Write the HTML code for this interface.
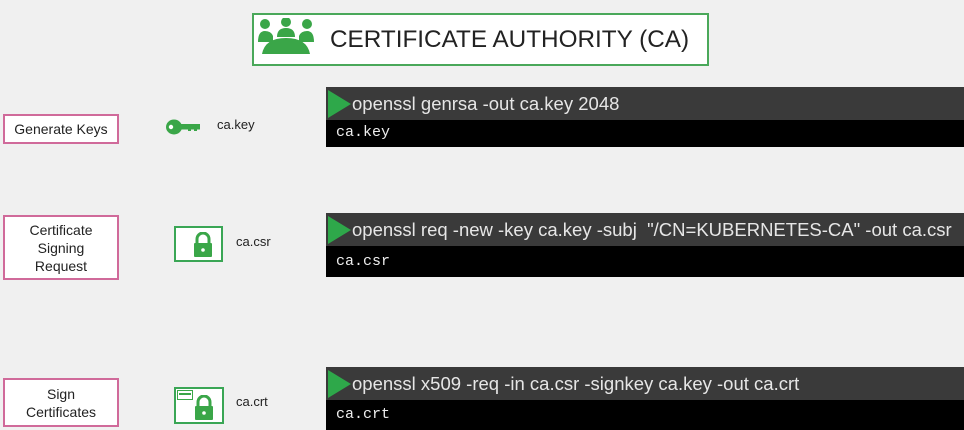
<!DOCTYPE html>
<html><head><meta charset="utf-8"><style>
body{margin:0;width:964px;height:430px;background:#f0f0f0;position:relative;overflow:hidden;font-family:"Liberation Sans",sans-serif}
.a{position:absolute}
.lbl{position:absolute;left:3px;width:112px;border:2px solid #d06a9a;background:#fff;color:#222;font-size:14px;text-align:center;display:flex;align-items:center;justify-content:center;line-height:18px}
.hd{position:absolute;left:326px;width:638px;height:33px;background:#3a3a3a;color:#e6e6e6;font-size:18.5px;line-height:33px;box-sizing:border-box;padding-left:26px;white-space:nowrap;overflow:hidden}
.hd:before{content:"";position:absolute;left:2px;top:3px;border-left:23px solid #2ea84a;border-top:14px solid transparent;border-bottom:14px solid transparent}
.bd{position:absolute;left:326px;width:638px;background:#000;color:#eee;font-family:"Liberation Mono",monospace;font-size:15px;box-sizing:border-box;padding-left:10px}
.fn{position:absolute;font-size:13px;color:#222}
.lock{position:absolute;border:2px solid #3aa655;background:#fff;box-sizing:border-box}
</style></head><body>
<div class="a" style="left:252px;top:13px;width:457px;height:53px;border:2px solid #4aa85a;background:#fff;box-sizing:border-box"></div>
<svg class="a" style="left:257px;top:18px" width="58" height="40" viewBox="0 0 58 40">
<g fill="#3aa648"><circle cx="8" cy="6" r="5"/><circle cx="29" cy="4" r="5"/><circle cx="50" cy="6" r="5"/>
<path d="M1 24q0-11 7-11q6 0 8 5v6z"/><path d="M20 19q0-9 9-9q9 0 9 9z"/><path d="M42 18q2-5 8-5q7 0 7 11h-15z"/>
<path d="M5 36q3-16 24-16q21 0 24 16z"/></g></svg>
<div class="a" style="left:330px;top:26px;font-size:24.3px;color:#222">CERTIFICATE AUTHORITY (CA)</div>

<div class="lbl" style="top:114px;height:26px">Generate Keys</div>
<div class="lbl" style="top:215px;height:61px">Certificate<br>Signing<br>Request</div>
<div class="lbl" style="top:378px;height:45px">Sign<br>Certificates</div>

<svg class="a" style="left:166px;top:119px" width="36" height="16" viewBox="0 0 36 16"><g fill="#3aa648"><ellipse cx="8" cy="8" rx="8" ry="7.5"/><rect x="12" y="5" width="22" height="5.5"/><rect x="22" y="9" width="3" height="3"/><rect x="28" y="9" width="3" height="3"/></g><circle cx="5" cy="8" r="2.2" fill="#fff"/></svg>
<div class="fn" style="left:217px;top:117px">ca.key</div>

<div class="lock" style="left:174px;top:226px;width:49px;height:36px"></div>
<svg class="a" style="left:193px;top:232px" width="20" height="26" viewBox="0 0 20 26"><path d="M4 11V7a6 6 0 0 1 12 0v4" fill="none" stroke="#3aa648" stroke-width="3"/><rect x="1" y="11" width="18" height="14" rx="1" fill="#3aa648"/><circle cx="10" cy="18" r="1.8" fill="#fff"/></svg>
<div class="fn" style="left:236px;top:234px">ca.csr</div>

<div class="lock" style="left:174px;top:387px;width:50px;height:37px"></div>
<svg class="a" style="left:177px;top:390px" width="16" height="10"><rect x="0.5" y="0.5" width="15" height="9" fill="none" stroke="#3aa648"/><rect x="2" y="3" width="12" height="2" fill="#3aa648"/></svg>
<svg class="a" style="left:194px;top:395px" width="20" height="26" viewBox="0 0 20 26"><path d="M4 11V7a6 6 0 0 1 12 0v4" fill="none" stroke="#3aa648" stroke-width="3"/><rect x="1" y="11" width="18" height="14" rx="1" fill="#3aa648"/><circle cx="10" cy="18" r="1.8" fill="#fff"/></svg>
<div class="fn" style="left:236px;top:394px">ca.crt</div>

<div class="hd" style="top:87px">openssl genrsa -out ca.key 2048</div>
<div class="bd" style="top:120px;height:27px;line-height:26px">ca.key</div>
<div class="hd" style="top:213px">openssl req -new -key ca.key -subj&nbsp; "/CN=KUBERNETES-CA" -out ca.csr</div>
<div class="bd" style="top:246px;height:31px;line-height:31px">ca.csr</div>
<div class="hd" style="top:367px">openssl x509 -req -in ca.csr -signkey ca.key -out ca.crt</div>
<div class="bd" style="top:400px;height:30px;line-height:30px">ca.crt</div>
</body></html>
